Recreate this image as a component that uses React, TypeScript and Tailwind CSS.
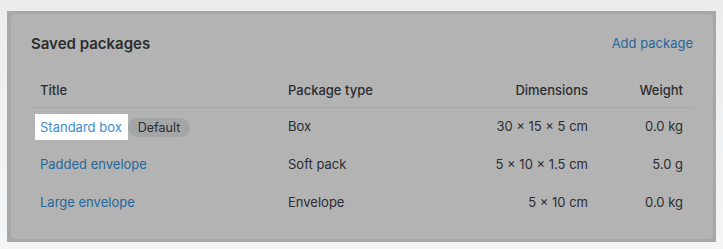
const rows = [
  { title: "Standard box", type: "Box", dims: "30 × 15 × 5 cm", weight: "0.0 kg", isDefault: true },
  { title: "Padded envelope", type: "Soft pack", dims: "5 × 10 × 1.5 cm", weight: "5.0 g", isDefault: false },
  { title: "Large envelope", type: "Envelope", dims: "5 × 10 cm", weight: "0.0 kg", isDefault: false },
];

const cols = "grid grid-cols-[248px_1fr_150px_96px] items-center";

export default function App() {
  return (
    <div className="w-[723px] h-[249px] bg-gradient-to-b from-[#ececed] to-[#f4f5f6] pt-[11px] pl-[7px] font-['Inter',sans-serif] text-[#2b2d30]">
      <div className="w-[709px] h-[231px] bg-[#a7a7a7] pt-[3px] pl-[4px] pr-[3px] pb-[3px]">
        <div className="h-full rounded-[4px] bg-[#b3b3b3] px-5 pt-5">
          <div className="flex items-center justify-between h-5">
            <h2 className="text-[15px] font-semibold">Saved packages</h2>
            <span className="text-[13px] text-[#27679a]">Add package</span>
          </div>

          <div className="mt-[20px]">
            <div className={`${cols} h-[34px] border-b border-[#a9a9a9] text-[13px] font-medium`}>
              <div className="pl-[9px]">Title</div>
              <div className="pl-[9px]">Package type</div>
              <div className="pr-[9px] text-right">Dimensions</div>
              <div className="pr-[10px] text-right">Weight</div>
            </div>
            {rows.map((r) => (
              <div key={r.title} className={`${cols} h-[38px] text-[13px]`}>
                <div className="flex items-center">
                  {r.isDefault ? (
                    <>
                      <span className="ml-[4px] bg-white pl-[5px] pr-[6px] h-[26px] leading-[26px] text-[#3a8bd2]">
                        {r.title}
                      </span>
                      <span className="h-[19px] leading-[19px] rounded-full bg-[#a3a5a7] px-[10px] text-[12.5px]">
                        Default
                      </span>
                    </>
                  ) : (
                    <span className="pl-[9px] text-[#27679a]">{r.title}</span>
                  )}
                </div>
                <div className="pl-[9px]">{r.type}</div>
                <div className="pr-[9px] text-right">{r.dims}</div>
                <div className="pr-[10px] text-right">{r.weight}</div>
              </div>
            ))}
          </div>
        </div>
      </div>
    </div>
  );
}
